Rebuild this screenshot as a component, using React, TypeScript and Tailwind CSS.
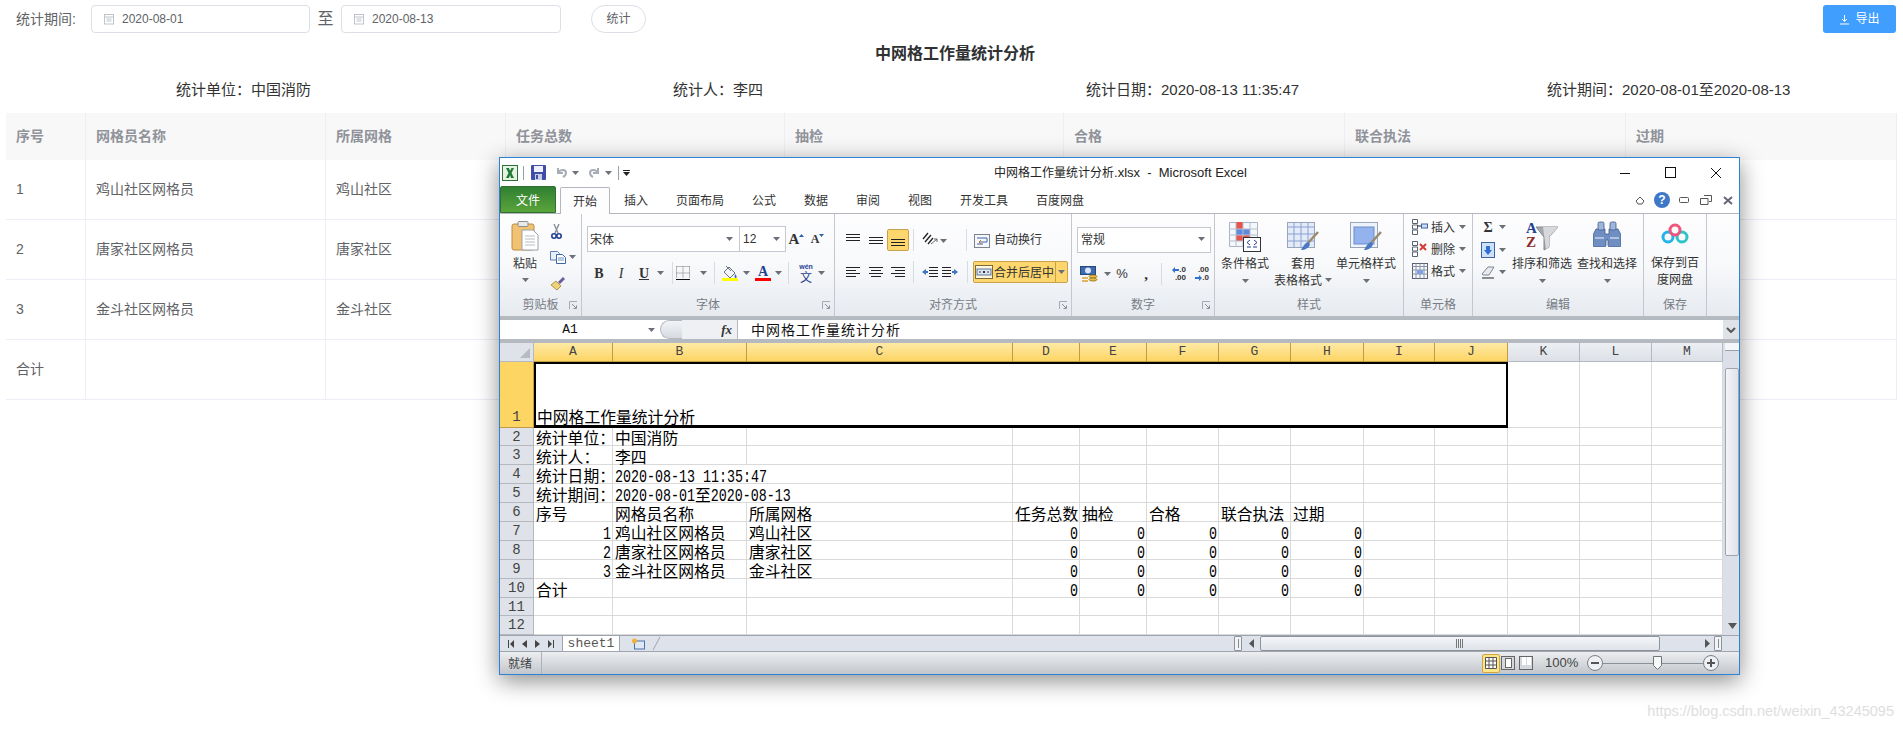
import type { ReactNode } from "react";

const cjk = '"Noto Sans CJK SC", sans-serif';

const tableCols = "grid-cols-[80px_240px_180px_279px_279px_281px_281px_271px]";

const tableRows = [
  ["1", "鸡山社区网格员", "鸡山社区"],
  ["2", "唐家社区网格员", "唐家社区"],
  ["3", "金斗社区网格员", "金斗社区"],
  ["合计", "", ""],
];

type SheetCell = { t?: string; right?: boolean; spill?: boolean };

const sheetRows: { h: string; cells: SheetCell[] }[] = [
  { h: "2", cells: [{ t: "统计单位\uFF1A" }, { t: "中国消防" }] },
  { h: "3", cells: [{ t: "统计人\uFF1A" }, { t: "李四" }] },
  { h: "4", cells: [{ t: "统计日期\uFF1A" }, { t: "2020-08-13 11:35:47", spill: true }] },
  { h: "5", cells: [{ t: "统计期间\uFF1A" }, { t: "2020-08-01至2020-08-13", spill: true }] },
  {
    h: "6",
    cells: [{ t: "序号" }, { t: "网格员名称" }, { t: "所属网格" }, { t: "任务总数" }, { t: "抽检" }, { t: "合格" }, { t: "联合执法" }, { t: "过期" }],
  },
  { h: "7", cells: dataRow("1", "鸡山社区网格员", "鸡山社区") },
  { h: "8", cells: dataRow("2", "唐家社区网格员", "唐家社区") },
  { h: "9", cells: dataRow("3", "金斗社区网格员", "金斗社区") },
  { h: "10", cells: dataRow("", "", "", "合计") },
  { h: "11", cells: [] },
  { h: "12", cells: [] },
];

function dataRow(no: string, name: string, grid: string, first?: string): SheetCell[] {
  const zero = { t: "0", right: true };
  return [first ? { t: first } : { t: no, right: true }, { t: name }, { t: grid }, zero, zero, zero, zero, zero];
}

// latin goes in at the narrow mono size (stretched, it is SimSun in the shot), hanzi at 16px
function Mixed({ text }: { text: string }) {
  const parts = text.split(/([\x00-\x7f]+)/).filter(Boolean);
  return (
    <>
      {parts.map((p, i) =>
        /^[\x00-\x7f]/.test(p) ? (
          <span key={i} className="inline-block origin-center translate-y-[3px] scale-y-[1.35] whitespace-pre font-['Liberation_Mono',monospace] text-[13.33px] leading-[16px]">
            {p}
          </span>
        ) : (
          <span key={i} className="text-[15.8px] leading-[17px]">
            {p}
          </span>
        ),
      )}
    </>
  );
}

function Chev({ className = "" }: { className?: string }) {
  return (
    <svg width="7" height="4" viewBox="0 0 7 4" className={className}>
      <path d="M0 0h7L3.5 4z" fill="#6b7078" />
    </svg>
  );
}

function Launcher() {
  return (
    <svg width="9" height="9" viewBox="0 0 9 9" className="absolute right-[3px] bottom-[6px]">
      <path d="M.5 8V.5H8" fill="none" stroke="#a5a9b0" />
      <path d="M3 3l4 4M4.5 7.5h3v-3" fill="none" stroke="#8a8f96" />
    </svg>
  );
}

function Sep({ className = "" }: { className?: string }) {
  return <div className={`h-[22px] w-px bg-[#d8dbe0] ${className}`} />;
}

function Group({ label, className, launcher, children }: { label: string; className: string; launcher?: boolean; children: ReactNode }) {
  return (
    <div className={`relative flex h-full shrink-0 flex-col border-r border-[#c4c8ce] ${className}`}>
      <div className="min-h-0 flex-1">{children}</div>
      <div className="h-[22px] text-center text-[12px] leading-[20px] text-[#777c85]">{label}</div>
      {launcher ? <Launcher /> : null}
    </div>
  );
}

function Lines({ kind }: { kind: "left" | "center" | "right" | "top" | "mid" | "bottom" }) {
  const rows =
    kind === "left"
      ? ["M1 2.5h14", "M1 5.5h10", "M1 8.5h14", "M1 11.5h10"]
      : kind === "center"
        ? ["M1 2.5h14", "M3 5.5h10", "M1 8.5h14", "M3 11.5h10"]
        : kind === "right"
          ? ["M1 2.5h14", "M5 5.5h10", "M1 8.5h14", "M5 11.5h10"]
          : kind === "top"
            ? ["M1 1.5h14", "M1 4.5h14", "M1 7.5h14"]
            : kind === "mid"
              ? ["M1 4.5h14", "M1 7.5h14", "M1 10.5h14"]
              : ["M1 6.5h14", "M1 9.5h14", "M1 12.5h14"];
  return (
    <svg width="16" height="14" viewBox="0 0 16 14">
      <path d={rows.join("")} stroke="#222" fill="none" />
    </svg>
  );
}

function ExcelLogo() {
  return (
    <svg width="16" height="16" viewBox="0 0 16 16">
      <rect x=".5" y=".5" width="15" height="15" fill="#e6f2e2" stroke="#2f6f3a" />
      <path d="M4 3h3l1 3 1.500-3H12L9.500 8 12 13H9L8 10l-1 3H4l2.500-5z" fill="#1e7a34" />
    </svg>
  );
}

function SaveIcon() {
  return (
    <svg width="15" height="15" viewBox="0 0 15 15">
      <rect width="15" height="15" rx="1" fill="#3f4fa8" />
      <rect x="3" y="1" width="9" height="6" fill="#eef1fb" />
      <rect x="4" y="9" width="7" height="6" fill="#c9cfe0" />
      <rect x="5" y="10" width="2" height="4" fill="#3f4fa8" />
    </svg>
  );
}

function UndoIcon({ flip }: { flip?: boolean }) {
  return (
    <svg width="13" height="13" viewBox="0 0 13 13" className={flip ? "-scale-x-100" : ""}>
      <path d="M3 2v5h5M3 7c2-4 8-4 8 0 0 2-1 3-3 4" fill="none" stroke="#a8adb5" strokeWidth="2" />
    </svg>
  );
}

function PasteIcon() {
  return (
    <svg width="28" height="30" viewBox="0 0 28 30">
      <rect x="1" y="3" width="22" height="26" rx="2" fill="#f1c272" stroke="#b98c45" />
      <rect x="7" y="0.500" width="10" height="5" rx="1" fill="#e9e9e9" stroke="#8d8d8d" />
      <path d="M11 9h11l5 5v15H11z" fill="#fff" stroke="#9aa0a8" />
      <path d="M14 15h10M14 18h10M14 21h10M14 24h10" stroke="#b7bcc4" />
    </svg>
  );
}

function ScissorsIcon() {
  return (
    <svg width="11" height="15" viewBox="0 0 11 15">
      <path d="M3 0l4 9M8 0L4 9" stroke="#8a8f98" strokeWidth="1.400" fill="none" />
      <circle cx="3" cy="12" r="2.200" fill="none" stroke="#1f3f8f" strokeWidth="1.600" />
      <circle cx="8" cy="12" r="2.200" fill="none" stroke="#1f3f8f" strokeWidth="1.600" />
    </svg>
  );
}

function CopyIcon() {
  return (
    <svg width="16" height="13" viewBox="0 0 16 13">
      <path d="M.5.500h7l2 2V9H.5z" fill="#e8f0fb" stroke="#5c7fb5" />
      <path d="M6.500 3.500h6l3 3v6h-9z" fill="#fff" stroke="#3c64a8" />
      <path d="M8 7h6M8 9h6" stroke="#6e8fc2" />
    </svg>
  );
}

function BrushIcon() {
  return (
    <svg width="16" height="15" viewBox="0 0 16 15">
      <path d="M1 9l5-4 5 5-4 4z" fill="#f0d27a" stroke="#b19645" />
      <path d="M8 6l5-5 2 2-5 5z" fill="#6a5a9a" />
    </svg>
  );
}

function FillIcon() {
  return (
    <svg width="16" height="16" viewBox="0 0 16 16">
      <path d="M2 7l5-5 6 6-5 5z" fill="#f2f4f8" stroke="#6c7480" />
      <path d="M4 1l5 5" stroke="#6c7480" />
      <path d="M13 9c2 2 2 3 1 4s-2-1-1-4z" fill="#3c6bb5" />
      <rect y="13" width="16" height="3" fill="#ffff00" />
    </svg>
  );
}

function WrapIcon() {
  return (
    <svg width="16" height="14" viewBox="0 0 16 14">
      <rect x=".5" y=".5" width="15" height="13" fill="#f5f7fb" stroke="#7a8290" />
      <path d="M3 4h10v4H6M3 10h6" stroke="#3c64a8" fill="none" />
      <path d="M7 6L5 8l2 2" stroke="#c77a20" fill="none" />
    </svg>
  );
}

function MergeIcon() {
  return (
    <svg width="18" height="14" viewBox="0 0 18 14">
      <rect x=".5" y=".5" width="17" height="13" fill="#fff8df" stroke="#7d6a3a" />
      <rect x="2" y="4" width="14" height="6" fill="#dfe6f2" stroke="#5c74a0" />
      <path d="M4 7h2M12 7h2" stroke="#333" />
      <path d="M8 6h2v2H8z" fill="#333" />
    </svg>
  );
}

function IndentIcon({ flip }: { flip?: boolean }) {
  return (
    <svg width="16" height="13" viewBox="0 0 16 13" className={flip ? "-scale-x-100" : ""}>
      <path d="M7 1.500h9M7 4.500h9M7 7.500h9M7 10.500h9" stroke="#222" />
      <path d="M0 6l4-3v2h2v2H4v2z" fill="#3f73c4" />
    </svg>
  );
}

function OrientIcon() {
  return (
    <svg width="17" height="15" viewBox="0 0 17 15">
      <path d="M1 7l5-6M3 10l6-7M6 12l5-6" stroke="#222" strokeWidth="1.300" />
      <path d="M9 12l6-5M15 7h-3M15 7v3" fill="none" stroke="#666" />
    </svg>
  );
}

function GridBorderIcon() {
  return (
    <svg width="14" height="14" viewBox="0 0 14 14">
      <path d="M.5.500h13M.5 7h13M.5.500v12M7 .5v12M13.500.500v12" stroke="#777" strokeDasharray="1 1" />
      <path d="M0 13.500h14" stroke="#111" />
    </svg>
  );
}

function AccountingIcon() {
  return (
    <svg width="18" height="16" viewBox="0 0 18 16">
      <rect x=".5" y=".5" width="15" height="8" fill="#3a6ab0" stroke="#27487f" />
      <ellipse cx="8" cy="4.500" rx="3" ry="3" fill="#dce7f7" />
      <ellipse cx="13" cy="10.500" rx="4" ry="1.500" fill="#e9c04a" stroke="#a5811f" />
      <ellipse cx="13" cy="13.500" rx="4" ry="1.500" fill="#e9c04a" stroke="#a5811f" />
      <path d="M2 12h6M2 15h6" stroke="#e0a030" strokeWidth="1.400" />
    </svg>
  );
}

function SmallArrow({ flip }: { flip?: boolean }) {
  return (
    <svg width="7" height="6" viewBox="0 0 7 6" className={flip ? "shrink-0 -scale-x-100" : "shrink-0"}>
      <path d="M0 3l3-3v2h4v2H3v2z" fill="#2f6fd0" />
    </svg>
  );
}

function DecimalIcon({ dir }: { dir: "more" | "less" }) {
  return (
    <div className="flex w-[16px] flex-col items-end font-['Liberation_Sans',sans-serif] text-[8px] leading-[8px] font-bold text-[#333]">
      {dir === "more" ? (
        <>
          <span className="flex items-center">
            <SmallArrow />
            .0
          </span>
          <span>.00</span>
        </>
      ) : (
        <>
          <span>.00</span>
          <span className="flex items-center">
            <SmallArrow flip />
            .0
          </span>
        </>
      )}
    </div>
  );
}

function CondIcon() {
  return (
    <svg width="32" height="30" viewBox="0 0 32 30">
      <path d="M.5 .5h28v24H.5z" fill="#f4f7fc" stroke="#aab4c4" />
      <rect x="7" y="0" width="7" height="7" fill="#e8544c" />
      <rect x="7" y="7" width="14" height="6" fill="#5d8be0" />
      <rect x="7" y="13" width="14" height="6" fill="#e8544c" />
      <path d="M7 0v25M14 0v25M21 0v25M0 7h29M0 13h29M0 19h29" stroke="#b6bfce" fill="none" />
      <rect x="14.500" y="15.500" width="17" height="14" fill="#fff" stroke="#333" />
      <path d="M21 18l-3 2.500 3 2.500M18 25h4M25 18l3 2.500-3 2.500M24 25h4" stroke="#1f3f8f" fill="none" />
    </svg>
  );
}

function TableStyleIcon({ solid }: { solid?: boolean }) {
  return (
    <svg width="32" height="30" viewBox="0 0 32 30">
      <rect x=".5" y=".5" width="27" height="25" fill={solid ? "#eef2fa" : "#e4ebf8"} stroke="#9aa5b8" />
      {solid ? (
        <rect x="4" y="5" width="20" height="17" fill="#94b2ee" stroke="#6d8ccc" />
      ) : (
        <path d="M7 0v26M14 0v26M21 0v26M0 5h28M0 12h28M0 19h28" stroke="#8aa0d0" />
      )}
      <path d="M31 10L21 21" stroke="#9a8a70" strokeWidth="2.500" />
      <path d="M21 20c-3 1-5 4-7 8 4 0 8-2 9-6z" fill="#4a78c4" />
    </svg>
  );
}

function InsertCellIcon({ kind }: { kind: "insert" | "delete" | "format" }) {
  if (kind === "format") {
    return (
      <svg width="16" height="16" viewBox="0 0 16 16">
        <rect x=".5" y=".5" width="15" height="15" fill="#f7f9fc" stroke="#5a6270" />
        <path d="M.5 3.500h15M.5 7h15M.5 11h15M4 .5v15M8 .5v15M12 .5v15" stroke="#8a94a6" />
        <rect x="5" y="7" width="6" height="4" fill="#7ea3e6" />
      </svg>
    );
  }
  return (
    <svg width="16" height="16" viewBox="0 0 16 16">
      <path d="M.5.500h5v4h-5zM.5 11h5v4.500h-5zM.5 6h5v4h-5z" fill="#fff" stroke="#5a6270" />
      {kind === "insert" ? (
        <>
          <rect x="9.500" y="5" width="6" height="4" fill="#cfe0fa" stroke="#3c64a8" />
          <path d="M5 7h4" stroke="#222" />
        </>
      ) : (
        <path d="M8 3l6 6M14 3L8 9" stroke="#d83a34" strokeWidth="2" />
      )}
    </svg>
  );
}

function SortIcon() {
  return (
    <svg width="32" height="30" viewBox="0 0 32 30">
      <path d="M10 6h22l-9 10v10l-5 3V16z" fill="#a5a8ad" stroke="#85888e" />
      <path d="M17 6h15l-9 10v10l-3 2z" fill="#d6d8dc" />
    </svg>
  );
}

function FindIcon() {
  return (
    <svg width="28" height="26" viewBox="0 0 28 26">
      <path d="M3 8h9v5h4V8h9l3 6v10a2 2 0 0 1-2 2h-9a2 2 0 0 1-2-2v-5h-2v5a2 2 0 0 1-2 2H2a2 2 0 0 1-2-2V14z" fill="#6f8fc2" stroke="#3e5a8c" strokeWidth=".8" />
      <rect x="5" y="1" width="6" height="8" rx="1.500" fill="#9fb6dc" stroke="#3e5a8c" strokeWidth=".8" />
      <rect x="17" y="1" width="6" height="8" rx="1.500" fill="#9fb6dc" stroke="#3e5a8c" strokeWidth=".8" />
      <path d="M2 17h9M17 17h9" stroke="#c7d5ec" strokeWidth="1.500" />
    </svg>
  );
}

function BaiduIcon() {
  return (
    <svg width="28" height="22" viewBox="0 0 28 22">
      <circle cx="7" cy="14" r="5" fill="none" stroke="#22b4e8" strokeWidth="3" />
      <circle cx="21" cy="14" r="5" fill="none" stroke="#2cc4c8" strokeWidth="3" />
      <circle cx="14" cy="7" r="5" fill="none" stroke="#f2557a" strokeWidth="3" />
    </svg>
  );
}

function CalendarIcon() {
  return (
    <svg width="12" height="12" viewBox="0 0 12 12" className="shrink-0">
      <rect x="1.500" y="1.500" width="9" height="9.500" fill="none" stroke="#c0c4cc" />
      <path d="M1.500 4h9M3.500 6h5M3.500 8h5" stroke="#c0c4cc" />
    </svg>
  );
}

function DateInput({ value, className }: { value: string; className: string }) {
  return (
    <div className={`flex h-[28px] items-center rounded-[4px] border border-[#dcdfe6] pl-[11px] ${className}`}>
      <CalendarIcon />
      <span className="ml-[7px] text-[12px] text-[#606266]">{value}</span>
    </div>
  );
}

function FontSizeA({ size, up }: { size: string; up?: boolean }) {
  return (
    <div className={`flex h-[26px] w-[21px] items-center justify-center font-['Liberation_Serif',serif] font-bold ${size}`}>
      A
      <svg width="5" height="3" viewBox="0 0 5 3" className="mb-[8px]">
        <path d={up ? "M0 3h5L2.500 0z" : "M0 0h5L2.500 3z"} fill="#2f5fa8" />
      </svg>
    </div>
  );
}

function Ribbon() {
  return (
    <div className="flex h-[102px] shrink-0 bg-gradient-to-b from-[#fdfdfe] via-[#f8f9fb] to-[#e6eaef] text-[12px] text-[#333]">
      <Group label="剪贴板" className="w-[82px]" launcher>
        <div className="flex">
          <div className="flex w-[50px] flex-col items-center pt-[7px]">
            <PasteIcon />
            <span className="mt-[4px] leading-[16px]">粘贴</span>
            <Chev className="mt-[7px]" />
          </div>
          <div className="flex w-[30px] flex-col pt-[4px]">
            <div className="flex h-[26px] items-center pl-[1px]">
              <ScissorsIcon />
            </div>
            <div className="flex h-[26px] items-center">
              <CopyIcon />
              <Chev className="ml-[3px]" />
            </div>
            <div className="flex h-[26px] items-center">
              <BrushIcon />
            </div>
          </div>
        </div>
      </Group>

      <Group label="字体" className="w-[253px]" launcher>
        <div className="flex h-[38px] items-end pl-[5px]">
          <div className="flex h-[26px] w-[199px] border border-[#c5c9cf] bg-white">
            <div className="flex w-[152px] items-center justify-between border-r border-[#c5c9cf] pr-[6px] pb-[1px] pl-[2px]">
              <span>宋体</span>
              <Chev />
            </div>
            <div className="flex flex-1 items-center justify-between pr-[5px] pl-[3px]">
              <span className="font-['Liberation_Sans',sans-serif]">12</span>
              <Chev />
            </div>
          </div>
          <FontSizeA size="text-[15px]" up />
          <FontSizeA size="text-[12px]" />
        </div>
        <div className="mt-[10px] flex h-[22px] items-center pl-[5px]">
          <span className="w-[24px] text-center font-['Liberation_Serif',serif] text-[14px] font-bold">B</span>
          <span className="w-[20px] text-center font-['Liberation_Serif',serif] text-[14px] italic">I</span>
          <span className="w-[26px] text-center font-['Liberation_Serif',serif] text-[14px] font-bold underline">U</span>
          <Chev />
          <Sep className="ml-[8px]" />
          <div className="ml-[2px] flex w-[16px] justify-center">
            <GridBorderIcon />
          </div>
          <Chev className="ml-[9px]" />
          <Sep className="ml-[7px]" />
          <div className="ml-[7px] flex w-[16px] justify-center">
            <FillIcon />
          </div>
          <Chev className="ml-[5px]" />
          <div className="ml-[5px] flex w-[16px] flex-col items-center">
            <span className="font-['Liberation_Serif',serif] text-[14px] leading-[13px] font-bold text-[#1f3f8f]">A</span>
            <div className="h-[3px] w-[16px] bg-[#f00]" />
          </div>
          <Chev className="ml-[4px]" />
          <Sep className="ml-[6px]" />
          <div className="ml-[7px] flex w-[20px] flex-col items-center text-[#1f3f8f]">
            <span className="font-['Liberation_Sans',sans-serif] text-[7px] leading-[7px] font-bold">wén</span>
            <span className="text-[12px] leading-[13px]">文</span>
          </div>
          <Chev className="ml-[2px]" />
        </div>
      </Group>

      <Group label="对齐方式" className="w-[237px]" launcher>
        <div className="flex h-[37px] items-end pl-[6px]">
          <div className="flex h-[22px] w-[23px] items-center justify-center">
            <Lines kind="top" />
          </div>
          <div className="flex h-[22px] w-[23px] items-center justify-center">
            <Lines kind="mid" />
          </div>
          <div className="flex h-[22px] w-[22px] items-center justify-center rounded-[2px] border border-[#c8a24a] bg-[#fdd76e]">
            <Lines kind="bottom" />
          </div>
          <Sep className="ml-[4px]" />
          <div className="ml-[7px] mb-[4px] flex w-[18px] justify-center">
            <OrientIcon />
          </div>
          <Chev className="mb-[8px] ml-[1px]" />
          <Sep className="ml-[19px]" />
          <div className="mb-[3px] ml-[7px]">
            <WrapIcon />
          </div>
          <span className="mb-[2px] ml-[4px] leading-[20px]">自动换行</span>
        </div>
        <div className="mt-[10px] flex h-[22px] items-center pl-[6px]">
          <div className="flex w-[23px] justify-center">
            <Lines kind="left" />
          </div>
          <div className="flex w-[23px] justify-center">
            <Lines kind="center" />
          </div>
          <div className="flex w-[22px] justify-center">
            <Lines kind="right" />
          </div>
          <Sep className="ml-[4px]" />
          <div className="ml-[8px]">
            <IndentIcon />
          </div>
          <div className="ml-[4px]">
            <IndentIcon flip />
          </div>
          <Sep className="ml-[9px]" />
          <div className="ml-[5px] flex h-[22px] w-[95px] items-center rounded-[2px] border border-[#c8a24a] bg-[#fdd76e] pl-[1px]">
            <MergeIcon />
            <span className="ml-[1px] flex-1 whitespace-nowrap">合并后居中</span>
            <div className="flex h-full w-[12px] items-center justify-center border-l border-[#c8a24a]">
              <Chev />
            </div>
          </div>
        </div>
      </Group>

      <Group label="数字" className="w-[143px]" launcher>
        <div className="flex h-[39px] items-end pl-[5px]">
          <div className="flex h-[26px] w-[134px] items-center justify-between border border-[#c5c9cf] bg-white pr-[5px] pb-[2px] pl-[3px]">
            <span>常规</span>
            <Chev />
          </div>
        </div>
        <div className="mt-[10px] flex h-[22px] items-center pl-[8px]">
          <AccountingIcon />
          <Chev className="ml-[6px]" />
          <span className="ml-[2px] w-[18px] text-center font-['Liberation_Sans',sans-serif] text-[13px]">%</span>
          <span className="ml-[6px] w-[18px] text-center font-['Liberation_Serif',serif] text-[15px] leading-[10px] font-bold">,</span>
          <Sep className="ml-[6px]" />
          <div className="ml-[8px]">
            <DecimalIcon dir="more" />
          </div>
          <div className="ml-[7px]">
            <DecimalIcon dir="less" />
          </div>
        </div>
      </Group>

      <Group label="样式" className="w-[189px]">
        <div className="flex">
          <div className="flex w-[60px] flex-col items-center pt-[8px]">
            <CondIcon />
            <span className="mt-[3px] leading-[16px] whitespace-nowrap">条件格式</span>
            <Chev className="mt-[8px]" />
          </div>
          <div className="flex w-[56px] flex-col items-center pt-[8px]">
            <TableStyleIcon />
            <span className="mt-[3px] leading-[16px]">套用</span>
            <span className="flex items-center leading-[17px] whitespace-nowrap">
              表格格式
              <Chev className="ml-[3px]" />
            </span>
          </div>
          <div className="flex w-[70px] flex-col items-center pt-[8px]">
            <TableStyleIcon solid />
            <span className="mt-[3px] leading-[16px] whitespace-nowrap">单元格样式</span>
            <Chev className="mt-[8px]" />
          </div>
        </div>
      </Group>

      <Group label="单元格" className="w-[69px]">
        <div className="flex flex-col pt-[2px] pl-[8px]">
          {[
            ["insert", "插入"],
            ["delete", "删除"],
            ["format", "格式"],
          ].map(([kind, text]) => (
            <div key={kind} className="flex h-[22px] items-center">
              <InsertCellIcon kind={kind as "insert" | "delete" | "format"} />
              <span className="ml-[3px]">{text}</span>
              <Chev className="ml-[4px]" />
            </div>
          ))}
        </div>
      </Group>

      <Group label="编辑" className="w-[171px]">
        <div className="flex">
          <div className="flex w-[38px] flex-col pt-[2px] pl-[8px]">
            <div className="flex h-[22px] items-center">
              <span className="w-[14px] text-center font-['Liberation_Serif',serif] text-[14px] font-bold">Σ</span>
              <Chev className="ml-[4px]" />
            </div>
            <div className="flex h-[23px] items-center">
              <svg width="14" height="16" viewBox="0 0 14 16">
                <rect x=".5" y=".5" width="13" height="15" fill="#cfe0fa" stroke="#3c64a8" />
                <path d="M5 4h4v4h2l-4 5-4-5h2z" fill="#2f6fd0" />
              </svg>
              <Chev className="ml-[4px]" />
            </div>
            <div className="flex h-[22px] items-center">
              <svg width="14" height="13" viewBox="0 0 14 13">
                <path d="M1 8l6-7h6L8 9H2z" fill="#e8eaf0" stroke="#7e8490" />
                <path d="M1 12h12" stroke="#222" />
              </svg>
              <Chev className="ml-[4px]" />
            </div>
          </div>
          <div className="ml-[1px] flex w-[60px] flex-col items-center pt-[7px]">
            <div className="relative h-[30px] w-[32px]">
              <SortIcon />
              <span className="absolute top-[-4px] left-0 font-['Liberation_Serif',serif] text-[15px] font-bold text-[#1f3f8f]">A</span>
              <span className="absolute top-[10px] left-0 font-['Liberation_Serif',serif] text-[15px] font-bold text-[#8a2b2b]">Z</span>
            </div>
            <span className="mt-[4px] leading-[16px] whitespace-nowrap">排序和筛选</span>
            <Chev className="mt-[8px]" />
          </div>
          <div className="ml-[5px] flex w-[60px] flex-col items-center pt-[7px]">
            <FindIcon />
            <span className="mt-[8px] leading-[16px] whitespace-nowrap">查找和选择</span>
            <Chev className="mt-[8px]" />
          </div>
        </div>
      </Group>

      <Group label="保存" className="w-[63px]">
        <div className="flex flex-col items-center pt-[9px]">
          <BaiduIcon />
          <span className="mt-[9px] leading-[16px] whitespace-nowrap">保存到百</span>
          <span className="leading-[17px] whitespace-nowrap">度网盘</span>
        </div>
      </Group>
    </div>
  );
}

const sheetCols = "grid-cols-[34px_79px_134px_266px_67px_67px_72px_72px_73px_71px_73px_72px_72px_71px]";
const colLetters = ["A", "B", "C", "D", "E", "F", "G", "H", "I", "J", "K", "L", "M"];

function Sheet() {
  return (
    <div className={`grid ${sheetCols} grid-rows-[19px_66px_18px_repeat(8,19px)_18px_19px] bg-white text-[#000]`}>
      <div className="flex items-end justify-end border-r border-b border-[#b4b9c1] bg-[#dfe3e9] pr-[3px] pb-[3px]">
        <svg width="10" height="10" viewBox="0 0 10 10">
          <path d="M10 0v10H0z" fill="#b6bbc3" />
        </svg>
      </div>
      {colLetters.map((l, i) => (
        <div
          key={l}
          className={`flex items-center justify-center border-r border-b font-['Liberation_Mono',monospace] text-[13px] leading-[16px] text-[#444] ${
            i < 10
              ? "border-[#c29b44] bg-gradient-to-b from-[#fee9a4] to-[#fdd562]"
              : "border-[#b4b9c1] bg-gradient-to-b from-[#eceff3] to-[#dde1e7]"
          }`}
        >
          {l}
        </div>
      ))}

      <div className="flex items-end justify-center border-r border-b border-[#c29b44] bg-[#fdd562] font-['Liberation_Mono',monospace] text-[14px] leading-[20px] text-[#444]">
        1
      </div>
      <div className="col-span-10 flex items-end overflow-hidden border-2 border-b-[3px] border-black pl-[1px]">
        <Mixed text="中网格工作量统计分析" />
      </div>
      {[0, 1, 2].map((i) => (
        <div key={i} className="border-r border-b border-[#d9d9d9]" />
      ))}

      {sheetRows.map((row) => (
        <SheetRow key={row.h} h={row.h} cells={row.cells} />
      ))}
    </div>
  );
}

function SheetRow({ h, cells }: { h: string; cells: SheetCell[] }) {
  return (
    <>
      <div className="flex items-center justify-center border-r border-b border-[#b4b9c1] bg-[#dfe3e9] font-['Liberation_Mono',monospace] text-[14px] leading-[16px] text-[#444]">
        {h}
      </div>
      {colLetters.map((l, i) => {
        const c = cells[i];
        return (
          <div
            key={l}
            className={`flex items-center border-b border-[#d9d9d9] pt-[2px] whitespace-nowrap ${c?.spill ? "" : "border-r"} ${
              c?.right ? "justify-end pr-[1px]" : "pl-[2px]"
            }`}
          >
            {c?.t ? <Mixed text={c.t} /> : null}
          </div>
        );
      })}
    </>
  );
}

function ExcelWindow() {
  return (
    <div className="absolute top-[157px] left-[499px] flex h-[518px] w-[1241px] flex-col border border-[#2b82d9] bg-white font-['Noto_Sans_CJK_SC',sans-serif] shadow-[0_6px_22px_rgba(0,0,0,0.45)]">
      {/* title bar */}
      <div className="flex h-[29px] shrink-0 items-center bg-white">
        <div className="ml-[2px] flex w-[17px] items-center">
          <ExcelLogo />
        </div>
        <div className="ml-[4px] h-[14px] w-px bg-[#9aa0a8]" />
        <div className="ml-[7px]">
          <SaveIcon />
        </div>
        <div className="ml-[9px]">
          <UndoIcon />
        </div>
        <Chev className="ml-[4px]" />
        <div className="ml-[9px]">
          <UndoIcon flip />
        </div>
        <Chev className="ml-[4px]" />
        <div className="ml-[6px] h-[14px] w-px bg-[#9aa0a8]" />
        <svg width="7" height="6" viewBox="0 0 7 6" className="ml-[4px]">
          <path d="M0 0h7v1H0zM0 2h7L3.500 6z" fill="#222" />
        </svg>
        <div className="ml-[364px] text-[12px] whitespace-pre text-[#222]">
          中网格工作量统计分析<span className="font-['Liberation_Sans',sans-serif] text-[13px]">.xlsx  -  Microsoft Excel</span>
        </div>
        <div className="flex-1" />
        <svg width="12" height="12" viewBox="0 0 12 12">
          <path d="M1 6.500h10" stroke="#111" />
        </svg>
        <svg width="11" height="11" viewBox="0 0 11 11" className="ml-[34px]">
          <rect x=".5" y=".5" width="10" height="10" fill="none" stroke="#111" />
        </svg>
        <svg width="12" height="12" viewBox="0 0 12 12" className="mr-[17px] ml-[34px]">
          <path d="M1 1l10 10M11 1L1 11" stroke="#111" />
        </svg>
      </div>

      {/* tabs */}
      <div className="flex h-[27px] shrink-0 items-end border-b border-[#b3b7bd] text-[12px] text-[#333]">
        <div className="flex h-[27px] w-[56px] items-center justify-center rounded-t-[2px] border border-[#2f6f2f] bg-gradient-to-b from-[#2f7f32] to-[#5aa53b] text-white">
          文件
        </div>
        <div className="relative top-px ml-[4px] flex h-[27px] w-[50px] items-center justify-center rounded-t-[2px] border border-b-0 border-[#b3b7bd] bg-[#fdfdfe]">
          开始
        </div>
        {["插入", "页面布局", "公式", "数据", "审阅", "视图", "开发工具", "百度网盘"].map((t) => (
          <div key={t} className="flex h-[26px] items-center px-[14px]">
            {t}
          </div>
        ))}
        <div className="flex-1" />
        <div className="flex h-[26px] items-center">
          <svg width="10" height="9" viewBox="0 0 10 9">
            <path d="M1 5l4-4 4 4-2 3H3z" fill="none" stroke="#555" />
          </svg>
          <div className="ml-[9px] flex h-[16px] w-[16px] items-center justify-center rounded-full bg-[#3f78c6] font-['Liberation_Sans',sans-serif] text-[12px] font-bold text-white">
            ?
          </div>
          <svg width="10" height="6" viewBox="0 0 10 6" className="ml-[9px]">
            <rect x=".5" y=".5" width="9" height="5" rx="1" fill="none" stroke="#555" />
          </svg>
          <svg width="12" height="10" viewBox="0 0 12 10" className="ml-[11px]">
            <path d="M4 .5h7.500v6H9M.5 3.500H8v6H.5z" fill="none" stroke="#555" />
          </svg>
          <svg width="10" height="9" viewBox="0 0 10 9" className="mr-[6px] ml-[11px]">
            <path d="M1 1l8 7M9 1L1 8" stroke="#667" strokeWidth="2" />
          </svg>
        </div>
      </div>

      <Ribbon />

      {/* formula bar */}
      <div className="h-[4px] shrink-0 bg-[#b5bac1]" />
      <div className="flex h-[19px] shrink-0 items-center bg-white">
        <div className="flex h-full w-[160px] items-center">
          <span className="flex-1 pr-[8px] text-center font-['Liberation_Mono',monospace] text-[13px] text-[#111]">A1</span>
          <Chev className="mr-[5px]" />
        </div>
        <div className="h-full w-[22px] rounded-l-full border border-r-0 border-[#b5bac1] bg-gradient-to-b from-[#f2f4f7] to-[#d6dae0]" />
        <div className="flex h-full w-[55px] items-center justify-end bg-[#eef0f3] pr-[5px] font-['Liberation_Serif',serif] text-[13px] font-bold text-[#333] italic">
          fx
        </div>
        <div className="h-full w-px bg-[#b5bac1]" />
        <span className="ml-[13px] text-[14px] tracking-[1px] text-[#111]">中网格工作量统计分析</span>
        <div className="flex-1" />
        <div className="flex h-full w-[16px] items-center justify-center bg-[#dfe2e7]">
          <svg width="10" height="6" viewBox="0 0 10 6">
            <path d="M1 1l4 4 4-4" fill="none" stroke="#555" strokeWidth="2" />
          </svg>
        </div>
      </div>
      <div className="h-[4px] shrink-0 bg-[#b5bac1]" />

      {/* grid + vertical scrollbar */}
      <div className="flex h-[292px] shrink-0 overflow-hidden">
        <Sheet />
        <div className="flex flex-1 flex-col bg-[#dbe0e8] pl-[2px]">
          <div className="h-[8px] border-b border-[#9aa0a8] bg-[#f5f6f8]" />
          <div className="mt-[17px] h-[188px] rounded-[2px] border border-[#9ea5af] bg-gradient-to-r from-[#f4f5f8] to-[#dfe2e8]" />
          <div className="flex-1" />
          <div className="flex justify-center pb-[6px]">
            <svg width="9" height="6" viewBox="0 0 9 6">
              <path d="M0 0h9L4.500 6z" fill="#555" />
            </svg>
          </div>
        </div>
      </div>

      {/* sheet tabs + horizontal scrollbar */}
      <div className="flex h-[17px] shrink-0 items-center border-y border-[#9fa5ae] bg-[#dee2ea]">
        <div className="flex w-[62px] items-center justify-around pr-[4px] pl-[4px]">
          <svg width="6" height="8" viewBox="0 0 6 8">
            <path d="M0 0h1v8H0zM6 0v8L2 4z" fill="#444" />
          </svg>
          <svg width="5" height="8" viewBox="0 0 5 8">
            <path d="M5 0v8L0 4z" fill="#444" />
          </svg>
          <svg width="5" height="8" viewBox="0 0 5 8">
            <path d="M0 0v8l5-4z" fill="#444" />
          </svg>
          <svg width="6" height="8" viewBox="0 0 6 8">
            <path d="M5 0h1v8H5zM0 0v8l4-4z" fill="#444" />
          </svg>
        </div>
        <div className="flex h-full w-[58px] items-center justify-center border-x border-[#9fa5ae] bg-white font-['Liberation_Mono',monospace] text-[13px] leading-[14px] text-[#555]">
          sheet1
        </div>
        <div className="flex h-full w-[36px] items-center justify-center">
          <svg width="15" height="12" viewBox="0 0 15 12">
            <rect x="3.500" y="3" width="10" height="8" fill="#dfe8f6" stroke="#4a70a8" />
            <circle cx="3.500" cy="3" r="2.500" fill="#f2b233" />
          </svg>
        </div>
        <div className="h-full w-px rotate-[28deg] bg-[#9fa5ae]" />
        <div className="flex-1" />
        <div className="flex h-[15px] w-[8px] items-center justify-center rounded-[1px] border border-[#8e949d] bg-[#f2f3f6]">
          <div className="h-[9px] w-px bg-[#888]" />
        </div>
        <svg width="5" height="9" viewBox="0 0 5 9" className="ml-[7px]">
          <path d="M5 0v9L0 4.500z" fill="#555" />
        </svg>
        <div className="ml-[6px] flex h-[15px] w-[400px] items-center justify-center rounded-[2px] border border-[#8e949d] bg-gradient-to-b from-[#f4f6f9] to-[#dfe3e9]">
          <svg width="8" height="9" viewBox="0 0 8 9">
            <path d="M.5 0v9M2.500 0v9M4.500 0v9M6.500 0v9" stroke="#777" />
          </svg>
        </div>
        <svg width="5" height="9" viewBox="0 0 5 9" className="ml-[45px]">
          <path d="M0 0v9l5-4.500z" fill="#555" />
        </svg>
        <div className="ml-[4px] flex h-[15px] w-[8px] items-center justify-center rounded-[1px] border border-[#8e949d] bg-[#f2f3f6]">
          <div className="h-[9px] w-px bg-[#888]" />
        </div>
        <div className="w-[17px]" />
      </div>

      {/* status bar */}
      <div className="flex flex-1 items-center bg-gradient-to-b from-[#eceef1] to-[#c2c6cb] text-[12px] text-[#444]">
        <span className="ml-[8px]">就绪</span>
        <div className="ml-[9px] h-full w-px bg-[#aeb2b8]" />
        <div className="flex-1" />
        <div className="flex h-[19px] w-[18px] items-center justify-center rounded-[2px] border border-[#d2a63c] bg-[#fde58a]">
          <svg width="12" height="12" viewBox="0 0 12 12">
            <path d="M.5.500h11v11H.5zM4 .5v11M8 .5v11M.5 4h11M.5 8h11" fill="#fff" stroke="#555" />
          </svg>
        </div>
        <div className="ml-[1px] flex h-[14px] w-[14px] items-center justify-center border border-[#666] bg-[#d5d8dc]">
          <div className="h-[10px] w-[7px] border border-[#666] bg-white" />
        </div>
        <div className="ml-[4px] flex h-[14px] w-[14px] items-start justify-center gap-[1px] border border-[#666] bg-[#d5d8dc]">
          <div className="h-[8px] w-[4px] bg-white" />
          <div className="h-[8px] w-[4px] bg-white" />
        </div>
        <span className="ml-[12px] w-[36px] font-['Liberation_Sans',sans-serif] text-[13px] text-[#444]">100%</span>
        <div className="ml-[6px] flex h-[16px] w-[16px] items-center justify-center rounded-full border border-[#7a8088] bg-[#eef0f3]">
          <div className="h-[2px] w-[8px] bg-[#555]" />
        </div>
        <div className="relative flex h-[16px] w-[100px] items-center">
          <div className="h-px w-full bg-[#8a9098]" />
          <svg width="9" height="14" viewBox="0 0 9 14" className="absolute top-px left-[50px]">
            <path d="M.5.500h8v9l-4 4-4-4z" fill="#f8f8f8" stroke="#6e747c" />
          </svg>
        </div>
        <div className="relative flex h-[16px] w-[16px] items-center justify-center rounded-full border border-[#7a8088] bg-[#eef0f3]">
          <div className="h-[2px] w-[8px] bg-[#555]" />
          <div className="absolute h-[8px] w-[2px] bg-[#555]" />
        </div>
        <div className="w-[20px]" />
      </div>
    </div>
  );
}

export default function App() {
  return (
    <div className="relative h-[729px] w-full overflow-hidden bg-white text-[#333]" style={{ fontFamily: `"Liberation Sans", ${cjk}` }}>
      {/* filter row */}
      <div className="flex items-center pt-[5px] pl-[16px]">
        <label className="w-[75px] text-[14px] text-[#606266]">统计期间:</label>
        <DateInput value="2020-08-01" className="w-[219px]" />
        <span className="w-[31px] text-center text-[16px] text-[#606266]">至</span>
        <DateInput value="2020-08-13" className="w-[220px]" />
        <button className="ml-[30px] h-[28px] w-[55px] rounded-full border border-[#dcdfe6] text-[12px] text-[#606266]">统计</button>
        <button className="mr-[7px] ml-auto flex h-[28px] w-[73px] items-center justify-center gap-[5px] rounded-[3px] bg-[#409eff] text-[12px] text-white">
          <svg width="11" height="11" viewBox="0 0 11 11">
            <path d="M5.500 1v6M3 5l2.500 2.500L8 5M1 10h9" fill="none" stroke="#fff" />
          </svg>
          导出
        </button>
      </div>

      <h1 className="mt-[9px] pl-[7px] text-center text-[16px] leading-[24px] font-bold text-[#303133]">中网格工作量统计分析</h1>

      <div className="mt-[12px] grid grid-cols-[497px_413px_461px_1fr] pl-[176px] text-[15px] leading-[24px] text-[#333]">
        <span>{"统计单位\uFF1A中国消防"}</span>
        <span>{"统计人\uFF1A李四"}</span>
        <span>{"统计日期\uFF1A2020-08-13 11:35:47"}</span>
        <span>{"统计期间\uFF1A2020-08-01至2020-08-13"}</span>
      </div>

      {/* table */}
      <div className="mt-[11px] ml-[6px] w-[1891px] text-[14px] text-[#606266]">
        <div className={`grid ${tableCols} h-[47px] bg-[#f8f8f9] font-bold text-[#909399]`}>
          {["序号", "网格员名称", "所属网格", "任务总数", "抽检", "合格", "联合执法", "过期"].map((h) => (
            <div key={h} className="flex items-center border-r border-[#ebeef5] pl-[10px]">
              {h}
            </div>
          ))}
        </div>
        {tableRows.map((r) => (
          <div key={r[0]} className={`grid ${tableCols} h-[60px] border-b border-[#ebeef5]`}>
            {[0, 1, 2, 3, 4, 5, 6, 7].map((i) => (
              <div key={i} className="flex items-center border-r border-[#ebeef5] pl-[10px]">
                {r[i] ?? ""}
              </div>
            ))}
          </div>
        ))}
      </div>

      <ExcelWindow />

      <div className="absolute top-[700px] right-[9px] text-[14.5px] leading-[22px] text-[#dedede]">https://blog.csdn.net/weixin_43245095</div>
    </div>
  );
}
